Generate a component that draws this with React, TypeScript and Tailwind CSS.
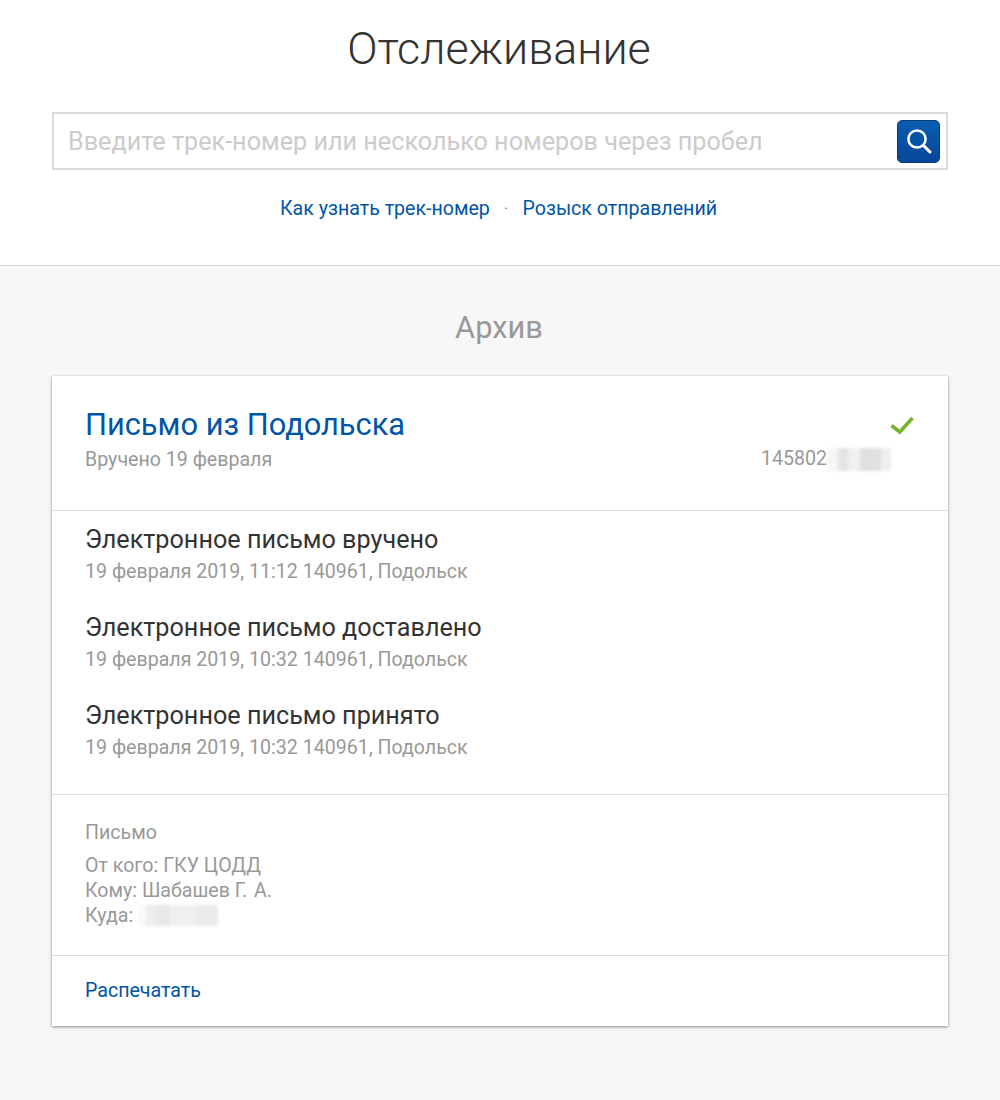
const events = [
  { title: "Электронное письмо вручено", time: "19 февраля 2019, 11:12 140961, Подольск" },
  { title: "Электронное письмо доставлено", time: "19 февраля 2019, 10:32 140961, Подольск" },
  { title: "Электронное письмо принято", time: "19 февраля 2019, 10:32 140961, Подольск" },
];

function SearchIcon() {
  return (
    <svg width="28" height="28" viewBox="0 0 28 28" fill="none" stroke="white" strokeLinecap="round">
      <circle cx="12" cy="12" r="8.6" strokeWidth="2.5" />
      <path d="M18.5 18.5 L25 25" strokeWidth="3" />
    </svg>
  );
}

function CheckMark() {
  return (
    <svg width="26" height="22" viewBox="0 0 26 22" fill="none" stroke="#74b32c" strokeWidth="3.6">
      <path d="M2.5 10.5 L10.8 17 L23.5 3" />
    </svg>
  );
}

function App() {
  return (
    <div className="h-[1100px] bg-[#f7f7f7] font-['Roboto',sans-serif] overflow-hidden">
      {/* Search header */}
      <div className="h-[266px] bg-white border-b border-[#d0d0d0] px-[52px]">
        <h1 className="pt-[21px] pr-[2px] text-center text-[44.8px] leading-[56px] font-light text-[#333333]">
          Отслеживание
        </h1>
        <div className="mt-[35px] h-[58px] border-2 border-[#dadada] flex items-center justify-between pl-[14px] pr-[6px]">
          <span className="pt-[2px] text-[25.2px] text-[#cccccc]">
            Введите трек-номер или несколько номеров через пробел
          </span>
          <button className="w-[43px] h-[43px] rounded-[5px] border border-[#0a3a78] bg-gradient-to-b from-[#0a5cb0] to-[#07479a] flex items-center justify-center">
            <SearchIcon />
          </button>
        </div>
        <div className="mt-[27px] pr-[3px] flex justify-center items-center text-[19.6px] leading-[24px] text-[#0055a6]">
          <span>Как узнать трек-номер</span>
          <span className="mx-[14.5px] text-[#666666] text-[14px]">·</span>
          <span>Розыск отправлений</span>
        </div>
      </div>

      {/* Archive */}
      <div className="px-[52px]">
        <h2 className="pt-[42px] pr-[2px] text-center text-[30.8px] leading-[40px] text-[#999999]">Архив</h2>

        <div className="mt-[28px] bg-white shadow-[0_1px_3px_rgba(0,0,0,0.45)]">
          <div className="h-[135px] border-b border-[#dedede] pl-[33px] pr-[33px] pt-[29px] flex justify-between">
            <div>
              <div className="text-[30.8px] leading-[40px] text-[#0055a6]">Письмо из Подольска</div>
              <div className="mt-[3px] text-[19.6px] leading-[24px] text-[#999999]">Вручено 19 февраля</div>
            </div>
            <div className="flex flex-col items-end">
              <div className="mt-[10px]">
                <CheckMark />
              </div>
              <div className="mt-[10px] pr-[24px] flex items-center text-[19.6px] leading-[24px] text-[#999999]">
                145802
                <span className="flex h-[23px] blur-[1.5px]">
                  <span className="w-[11px] bg-[#f6f6f6]" />
                  <span className="w-[10px] bg-[#e4e4e4]" />
                  <span className="w-[12px] bg-[#f0f0f0]" />
                  <span className="w-[21px] bg-[#e0e0e0]" />
                  <span className="w-[10px] bg-[#efefef]" />
                </span>
              </div>
            </div>
          </div>

          <div className="h-[284px] border-b border-[#dedede] pl-[33px] pt-[13px] flex flex-col gap-[24px]">
            {events.map((e) => (
              <div key={e.title}>
                <div className="text-[25.2px] leading-[32px] text-[#333333]">{e.title}</div>
                <div className="text-[19.6px] leading-[32px] text-[#999999]">{e.time}</div>
              </div>
            ))}
          </div>

          <div className="h-[161px] border-b border-[#dedede] pl-[33px] pt-[25px] text-[19.6px] leading-[25px] text-[#999999]">
            <div>Письмо</div>
            <div className="mt-[8px]">От кого: ГКУ ЦОДД</div>
            <div>
              Кому: Шабашев <span className="[word-spacing:2px]">Г. А.</span>
            </div>
            <div className="flex items-center">
              Куда:
              <span className="ml-[5px] flex h-[21px] blur-[1.5px]">
                <span className="w-[8px] bg-[#f9f9f9]" />
                <span className="w-[10px] bg-[#eeeeee]" />
                <span className="w-[14px] bg-[#e8e8e8]" />
                <span className="w-[24px] bg-[#f0f0f0]" />
                <span className="w-[24px] bg-[#ebebeb]" />
              </span>
            </div>
          </div>

          <div className="h-[70px] pl-[33px] flex items-center text-[19.6px] text-[#0055a6]">Распечатать</div>
        </div>
      </div>
    </div>
  );
}

export default App;
